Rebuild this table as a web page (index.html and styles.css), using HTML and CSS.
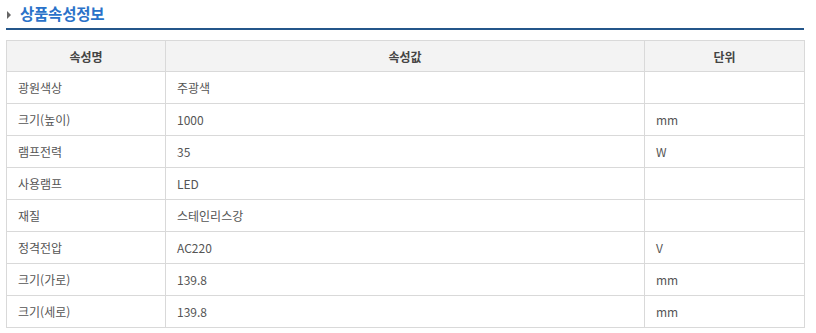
FILE: index.html
```html
<!DOCTYPE html>
<html lang="ko">
<head>
<meta charset="utf-8">
<link rel="stylesheet" href="styles.css">
</head>
<body>
<div class="wrap">
  <h2 class="title"><span class="arrow"></span><span class="title-text">상품속성정보</span></h2>
  <table class="attr">
    <thead>
      <tr><th class="c1">속성명</th><th class="c2">속성값</th><th class="c3">단위</th></tr>
    </thead>
    <tbody>
      <tr><td>광원색상</td><td>주광색</td><td></td></tr>
      <tr><td>크기(높이)</td><td>1000</td><td>mm</td></tr>
      <tr><td>램프전력</td><td>35</td><td>W</td></tr>
      <tr><td>사용램프</td><td>LED</td><td></td></tr>
      <tr><td>재질</td><td>스테인리스강</td><td></td></tr>
      <tr><td>정격전압</td><td>AC220</td><td>V</td></tr>
      <tr><td>크기(가로)</td><td>139.8</td><td>mm</td></tr>
      <tr><td>크기(세로)</td><td>139.8</td><td>mm</td></tr>
    </tbody>
  </table>
</div>
</body>
</html>
```

FILE: styles.css
```css
html, body {
  margin: 0;
  padding: 0;
  background: #fff;
}
body {
  font-family: "Noto Sans CJK KR", "Liberation Sans", sans-serif;
}
.wrap {
  padding: 0 12px 0 6px;
  width: 798px;
}
.title {
  margin: 0;
  height: 28px;
  border-bottom: 2px solid #24568a;
  display: flex;
  align-items: center;
  font-size: 15.5px;
  font-weight: bold;
  color: #2a72c9;
  line-height: 20px;
  box-sizing: content-box;
}
.arrow {
  display: inline-block;
  width: 0;
  height: 0;
  border-top: 4px solid transparent;
  border-bottom: 4px solid transparent;
  border-left: 4px solid #666;
  margin: 2px 9px 0 1px;
}
.title-text {
  letter-spacing: -0.2px;
  position: relative;
  top: -1px;
}
.attr {
  margin-top: 10px;
  width: 798px;
  border-collapse: collapse;
  font-size: 12px;
  color: #555;
  table-layout: fixed;
}
.attr th, .attr td {
  border: 1px solid #d9d9d9;
  padding: 0 0 0 11px;
  box-sizing: border-box;
}
.attr td {
  height: 32px;
  text-align: left;
}
.attr th {
  height: 31px;
  background: #f3f3f3;
  color: #444;
  font-weight: bold;
  text-align: center;
  padding: 0;
}
.c1 { width: 159px; }
.c2 { width: 479px; }
.c3 { width: 160px; }
```
